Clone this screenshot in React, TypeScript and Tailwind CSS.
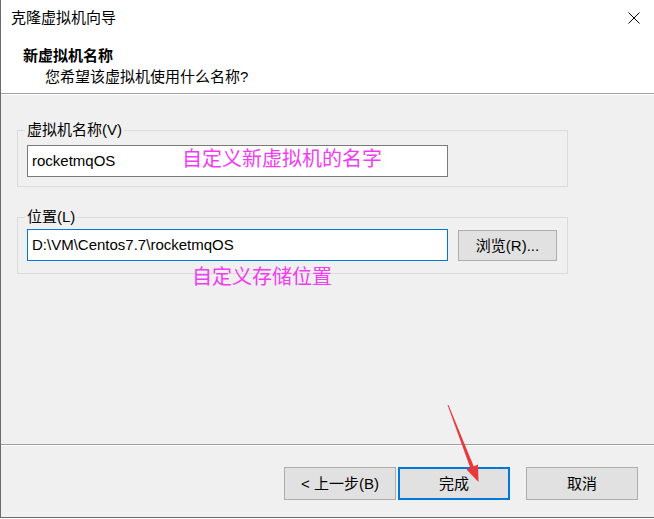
import React from "react";

const FONT = { fontFamily: '"Liberation Sans", "Noto Sans CJK SC", sans-serif' };

const GroupBox = ({
  label,
  className,
  children,
}: {
  label: string;
  className?: string;
  children: React.ReactNode;
}) => (
  <fieldset className={`ml-[16px] w-[551px] border border-[#dcdcdc] ${className ?? ""}`}>
    <legend className="ml-[7px] px-[2px] text-[15px] leading-[20px] text-black">{label}</legend>
    {children}
  </fieldset>
);

const WinButton = ({ label, primary }: { label: string; primary?: boolean }) => (
  <button
    className={`h-[33px] w-[112px] bg-[#e1e1e1] text-[15px] leading-none text-black ${
      primary ? "border-2 border-[#0078d7]" : "border border-[#adadad]"
    }`}
  >
    {label}
  </button>
);

export default function App() {
  return (
    <div className="relative h-[519px] w-[654px] overflow-hidden bg-white" style={FONT}>
      <div className="flex h-[518px] flex-col border-b border-l border-[#6b6b6b]">
        {/* Header */}
        <div className="h-[93px] bg-white">
          <div className="flex h-[36px] items-center justify-between pl-[10px] pr-[14px]">
            <span className="text-[15px] leading-[20px] text-black">克隆虚拟机向导</span>
            <svg width="12" height="12" viewBox="0 0 12 12" className="mb-[1px]">
              <path d="M0.5 0.5 L11.5 11.5 M11.5 0.5 L0.5 11.5" stroke="#000" strokeWidth="1" fill="none" />
            </svg>
          </div>
          <div className="mt-[10px] pl-[22px] text-[15px] font-bold leading-[20px] text-black">新虚拟机名称</div>
          <div className="mt-[1px] pl-[44px] text-[15px] leading-[20px] text-black">您希望该虚拟机使用什么名称?</div>
        </div>
        <div className="h-[2px] border-t border-b border-t-[#a0a0a0] border-b-white" />

        {/* Body */}
        <div className="flex flex-1 flex-col bg-[#f0f0f0]">
          <GroupBox label="虚拟机名称(V)" className="mt-[25px] h-[67px]">
            <div className="ml-[9px] mt-[5px] flex h-[32px] w-[421px] items-center border border-[#7a7a7a] bg-white pl-[4px] text-[15px] text-black">
              rocketmqOS
            </div>
          </GroupBox>

          <GroupBox label="位置(L)" className="mt-[20px] h-[67px]">
            <div className="ml-[9px] mt-[2px] flex items-center gap-[10px]">
              <div className="flex h-[32px] w-[421px] items-center border border-[#0078d7] bg-white pl-[4px] text-[15px] text-black">
                D:\VM\Centos7.7\rocketmqOS
              </div>
              <button className="h-[31px] w-[99px] border border-[#adadad] bg-[#e1e1e1] text-[15px] leading-none text-black">
                浏览(R)...
              </button>
            </div>
          </GroupBox>

          <div className="flex-1" />
          <div className="h-[2px] border-t border-b border-t-[#a0a0a0] border-b-white" />
          <div className="flex h-[71px] items-start pr-[16px] pt-[21px]">
            <div className="flex-1" />
            <WinButton label="< 上一步(B)" />
            <div className="w-[2px]" />
            <WinButton label="完成" primary />
            <div className="w-[16px]" />
            <WinButton label="取消" />
          </div>
        </div>
      </div>

      {/* Annotations over the screenshot */}
      <span className="absolute left-[182px] top-[145px] text-[20px] leading-[28px] text-[#f23cf2]">
        自定义新虚拟机的名字
      </span>
      <span className="absolute left-[192px] top-[263px] text-[20px] leading-[28px] text-[#f23cf2]">
        自定义存储位置
      </span>
      <svg className="pointer-events-none absolute left-0 top-0" width="654" height="519">
        <polygon points="447.5,405 448.5,405 474,467 470.5,468.5" fill="#e8393a" />
        <polygon points="466.5,469.5 478,464.5 478.5,482" fill="#e8393a" />
      </svg>
    </div>
  );
}
